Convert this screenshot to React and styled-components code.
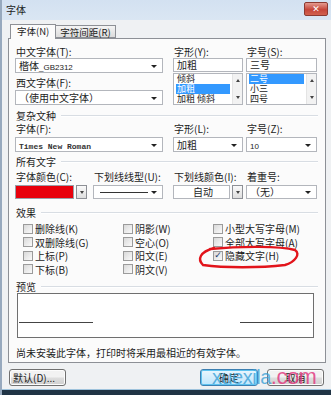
import React from 'react';
import styled, { createGlobalStyle } from 'styled-components';

const GlobalStyle = createGlobalStyle`
  html, body { margin: 0; padding: 0; }
  body {
    font-family: 'Noto Sans CJK SC', 'Noto Sans', sans-serif;
    font-size: 10px;
    color: #1c1c1c;
  }
`;

const Window = styled.div`
  position: relative;
  width: 331px;
  height: 395px;
  overflow: hidden;
  box-sizing: border-box;
  background: #eff1f3;
  border-left: 2px solid #97a9be;
  display: flex;
  flex-direction: column;
`;

const TitleBar = styled.div`
  height: 20px;
  flex: none;
  display: flex;
  align-items: center;
  justify-content: space-between;
  padding: 0 3px 0 4px;
  background: linear-gradient(#d3e1f1, #dae6f3);
  font-size: 10px;
  line-height: 12px;
`;

const CloseBtn = styled.div`
  width: 22px;
  height: 12px;
  margin-top: -2px;
  border: 1px solid #8c3a32;
  border-radius: 2px;
  background: linear-gradient(#e49a8f, #c6463a 55%, #d2624f);
  color: #fff;
  font-family: 'DejaVu Sans', sans-serif;
  font-size: 9px;
  font-weight: bold;
  line-height: 12px;
  text-align: center;
`;

const Body = styled.div`
  flex: 1;
  display: flex;
  flex-direction: column;
  padding: 5px 4px 0 6px;
`;

const TabRow = styled.div`
  height: 13px;
  display: flex;
  align-items: flex-end;
  padding-left: 2px;
  position: relative;
  z-index: 1;
`;

const Tab = styled.div`
  box-sizing: border-box;
  height: ${(p) => (p.$active ? 15 : 13)}px;
  margin-bottom: ${(p) => (p.$active ? -1 : 0)}px;
  padding: 0 ${(p) => (p.$active ? 6 : 4)}px;
  border: 1px solid #8d9096;
  border-bottom: ${(p) => (p.$active ? 'none' : '1px solid #8d9096')};
  border-left: ${(p) => (p.$active ? '1px solid #8d9096' : 'none')};
  background: ${(p) => (p.$active ? '#fbfbfb' : 'linear-gradient(#f4f4f4, #dcdcdc)')};
  font-size: 9.5px;
  line-height: 13px;
  white-space: nowrap;
`;

const Panel = styled.div`
  box-sizing: border-box;
  width: 318px;
  height: 325px;
  border: 1px solid #8d9096;
  background: #fbfbfb;
  padding: 7px 7px 0 6px;
  display: flex;
  flex-direction: column;
`;

const Row = styled.div`
  display: flex;
  margin-top: ${(p) => p.$mt || 0}px;
`;

const Col = styled.div`
  width: ${(p) => p.$w}px;
  margin-right: ${(p) => p.$gap || 0}px;
  display: flex;
  flex-direction: column;
`;

const Label = styled.div`
  height: 12px;
  line-height: 12px;
  margin-top: ${(p) => p.$mt || 0}px;
  padding-left: 1px;
  white-space: nowrap;
`;

const Combo = styled.div`
  position: relative;
  box-sizing: border-box;
  height: ${(p) => p.$h || 15}px;
  margin-top: ${(p) => p.$mt || 0}px;
  border: 1px solid #b3b6bc;
  background: #fff;
  padding-left: 3px;
  line-height: ${(p) => (p.$h || 15) - 2}px;
  white-space: nowrap;
  overflow: hidden;
  text-align: ${(p) => (p.$center ? 'center' : 'left')};
  &::after {
    content: '';
    display: ${(p) => (p.$noArrow ? 'none' : 'block')};
    position: absolute;
    right: 5px;
    top: 50%;
    margin-top: -1px;
    border-left: 3px solid transparent;
    border-right: 3px solid transparent;
    border-top: 3px solid #222;
  }
`;

const Mono = styled.span`
  font-family: 'Liberation Mono', monospace;
  font-size: 8px;
  font-weight: bold;
  color: #333;
`;

const Small = styled.span`
  font-family: 'Liberation Sans', sans-serif;
  font-size: 8px;
`;

const ListBox = styled.div`
  box-sizing: border-box;
  height: 32px;
  margin-top: 1px;
  border: 1px solid #b3b6bc;
  background: #fff;
  display: flex;
  overflow: hidden;
`;

const Items = styled.div`
  flex: 1;
  padding: 0 2px;
  display: flex;
  flex-direction: column;
`;

const Item = styled.div`
  height: 10px;
  line-height: 10px;
  font-size: 9px;
  padding-left: 1px;
  white-space: nowrap;
  overflow: hidden;
  background: ${(p) => (p.$selected ? '#3399ff' : 'transparent')};
  color: ${(p) => (p.$selected ? '#fff' : '#1c1c1c')};
`;

const ScrollBar = styled.div`
  width: 10px;
  border-left: 1px solid #e4e4e4;
  background: #f2f2f2;
  display: flex;
  flex-direction: column;
  justify-content: space-between;
  align-items: center;
  padding: 5px 0;
  box-sizing: border-box;
`;

const Arrow = styled.div`
  width: 0;
  height: 0;
  border-left: 2.5px solid transparent;
  border-right: 2.5px solid transparent;
  border-${(p) => (p.$up ? 'bottom' : 'top')}: 3px solid #444;
`;

const SectionHead = styled.div`
  display: flex;
  align-items: center;
  height: 12px;
  line-height: 12px;
  margin-top: ${(p) => p.$mt || 0}px;
  padding-left: 1px;
  &::after {
    content: '';
    flex: 1;
    margin-left: 5px;
    border-top: 1px solid #d8dde3;
    border-bottom: 1px solid #fff;
  }
`;

const PickerWrap = styled.div`
  display: flex;
  height: 14px;
  margin-top: 2px;
  gap: 2px;
`;

const Swatch = styled.div`
  flex: 1;
  box-sizing: border-box;
  border: 1px solid #9aa0a8;
  background: #e8000b;
`;

const DropBtn = styled.div`
  width: 11px;
  box-sizing: border-box;
  border: 1px solid #8d9096;
  background: linear-gradient(#fafafa, #dedede);
  display: flex;
  align-items: center;
  justify-content: center;
`;

const LineSample = styled.div`
  flex: 1;
  margin-right: 14px;
  border-top: 1px solid #333;
`;

const LineCombo = styled(Combo)`
  display: flex;
  align-items: center;
  padding-left: 6px;
`;

const AutoBox = styled(Combo)`
  flex: 1;
`;

const CheckGrid = styled.div`
  display: grid;
  grid-template-columns: 100px 90px auto;
  grid-auto-rows: 13.5px;
  margin-top: 3px;
  padding-left: 8px;
`;

const Check = styled.div`
  display: flex;
  align-items: center;
  gap: 2px;
  white-space: nowrap;
`;

const Box = styled.div`
  width: 10px;
  height: 10px;
  box-sizing: border-box;
  border: 1px solid #9b9b9b;
  background: linear-gradient(135deg, #d9d9d9, #fafafa);
  display: flex;
  align-items: center;
  justify-content: center;
  font-family: 'DejaVu Sans', sans-serif;
  font-size: 9px;
  font-weight: bold;
  color: #1d3a6a;
  line-height: 1;
`;

const Preview = styled.div`
  box-sizing: border-box;
  height: 45px;
  margin-left: 2px;
  margin-right: 4px;
  border: 1px solid #6f6f6f;
  background: #fff;
  display: flex;
  justify-content: space-between;
  align-items: flex-end;
  padding: 0 1px 14px 1px;
`;

const PreviewLine = styled.div`
  width: ${(p) => p.$w}px;
  border-top: 1px solid #444;
`;

const Footer = styled.div`
  margin-top: 9px;
  height: 12px;
  line-height: 12px;
  padding-left: 1px;
  white-space: nowrap;
`;

const ButtonRow = styled.div`
  display: flex;
  margin-top: 6px;
  padding-left: 1px;
`;

const Button = styled.div`
  box-sizing: border-box;
  width: ${(p) => p.$w || 58}px;
  height: 17px;
  margin-left: ${(p) => p.$ml || 0}px;
  border: 1px solid ${(p) => (p.$focus ? '#3c7fb1' : '#707070')};
  border-radius: 3px;
  background: ${(p) =>
    p.$focus ? 'linear-gradient(#eaf6fd, #bee6fd)' : 'linear-gradient(#f2f2f2 45%, #dddddd 55%, #cfcfcf)'};
  box-shadow: inset 0 0 0 1px ${(p) => (p.$focus ? '#5ec3f0' : '#fcfcfc')};
  line-height: 15px;
  text-align: ${(p) => (p.$left ? 'left' : 'center')};
  padding-left: ${(p) => (p.$left ? 3 : 0)}px;
  white-space: nowrap;
`;

const BottomBar = styled.div`
  position: absolute;
  left: -2px;
  right: 0;
  bottom: 0;
  height: 5px;
  background: #203445;
  border-top: 1px solid #9fc3dc;
`;

const Mark = styled.svg`
  position: absolute;
  left: 0;
  top: 0;
  pointer-events: none;
`;

const Watermark = styled.div`
  position: absolute;
  left: 210px;
  top: 366px;
  font-family: 'Liberation Sans', sans-serif;
  font-size: 20px;
  line-height: 22px;
  letter-spacing: -0.5px;
  white-space: nowrap;
  pointer-events: none;
  color: rgba(58, 160, 214, 0.8);
  span { color: rgba(226, 60, 130, 0.85); font-size: 22px; }
`;

const effects = [
  ['删除线(K)', '阴影(W)', '小型大写字母(M)'],
  ['双删除线(G)', '空心(O)', '全部大写字母(A)'],
  ['上标(P)', '阳文(E)', '隐藏文字(H)'],
  ['下标(B)', '阴文(V)', null],
];

const App = () => {
  return (
    <Window>
      <GlobalStyle />
      <TitleBar>
        <span>字体</span>
        <CloseBtn>✕</CloseBtn>
      </TitleBar>
      <Body>
        <TabRow>
          <Tab $active>字体(N)</Tab>
          <Tab>字符间距(R)</Tab>
        </TabRow>
        <Panel>
          <Row>
            <Col $w={148} $gap={10}>
              <Label>中文字体(T):</Label>
              <Combo>
                楷体<Small>_GB2312</Small>
              </Combo>
              <Label $mt={4}>西文字体(F):</Label>
              <Combo $mt={1}>（使用中文字体）</Combo>
            </Col>
            <Col $w={70} $gap={3}>
              <Label>字形(Y):</Label>
              <Combo $h={14} $noArrow>加粗</Combo>
              <ListBox>
                <Items>
                  <Item>倾斜</Item>
                  <Item $selected>加粗</Item>
                  <Item>加粗 倾斜</Item>
                </Items>
                <ScrollBar>
                  <Arrow $up />
                  <Arrow />
                </ScrollBar>
              </ListBox>
            </Col>
            <Col $w={71}>
              <Label>字号(S):</Label>
              <Combo $h={14} $noArrow>三号</Combo>
              <ListBox>
                <Items>
                  <Item $selected>二号</Item>
                  <Item>小三</Item>
                  <Item>四号</Item>
                </Items>
                <ScrollBar>
                  <Arrow $up />
                  <Arrow />
                </ScrollBar>
              </ListBox>
            </Col>
          </Row>

          <SectionHead $mt={5}>复杂文种</SectionHead>
          <Row $mt={1}>
            <Col $w={148} $gap={10}>
              <Label>字体(F):</Label>
              <Combo $mt={2}>
                <Mono>Times New Roman</Mono>
              </Combo>
            </Col>
            <Col $w={70} $gap={3}>
              <Label>字形(L):</Label>
              <Combo $mt={2}>加粗</Combo>
            </Col>
            <Col $w={71}>
              <Label>字号(Z):</Label>
              <Combo $mt={2}>
                <Small>10</Small>
              </Combo>
            </Col>
          </Row>

          <SectionHead $mt={4}>所有文字</SectionHead>
          <Row $mt={3}>
            <Col $w={72} $gap={6}>
              <Label>字体颜色(C):</Label>
              <PickerWrap>
                <Swatch />
                <DropBtn>
                  <Arrow />
                </DropBtn>
              </PickerWrap>
            </Col>
            <Col $w={70} $gap={10}>
              <Label>下划线线型(U):</Label>
              <LineCombo $h={14} $mt={2}>
                <LineSample />
              </LineCombo>
            </Col>
            <Col $w={70} $gap={3}>
              <Label>下划线颜色(I):</Label>
              <PickerWrap>
                <AutoBox $h={14} $noArrow $center>
                  自动
                </AutoBox>
                <DropBtn>
                  <Arrow />
                </DropBtn>
              </PickerWrap>
            </Col>
            <Col $w={71}>
              <Label>着重号:</Label>
              <Combo $h={14} $mt={2}>（无）</Combo>
            </Col>
          </Row>

          <SectionHead $mt={8}>效果</SectionHead>
          <CheckGrid>
            {effects.flat().map((name, i) =>
              name ? (
                <Check key={i}>
                  <Box>{name === '隐藏文字(H)' ? '✓' : ''}</Box>
                  {name}
                </Check>
              ) : (
                <div key={i} />
              )
            )}
          </CheckGrid>

          <SectionHead $mt={5}>预览</SectionHead>
          <Preview>
            <PreviewLine $w={74} />
            <PreviewLine $w={72} />
          </Preview>
          <Footer>尚未安装此字体，打印时将采用最相近的有效字体。</Footer>
        </Panel>
        <ButtonRow>
          <Button $w={57} $left>默认(D)...</Button>
          <Button $w={58} $ml={134} $focus>确定</Button>
          <Button $w={57} $ml={9}>取消</Button>
        </ButtonRow>
      </Body>

      <Mark width="331" height="395">
        <path
          d="M208 249 C240 246 278 246 293 250 C299 254 293 262 283 265 C258 268 222 268 201 265 C195 259 198 252 212 248"
          fill="none"
          stroke="#e2141b"
          strokeWidth="2.4"
          strokeLinecap="round"
        />
      </Mark>
      <Watermark>
        xuexila<span>.com</span>
      </Watermark>
      <BottomBar />
    </Window>
  );
};

export default App;
